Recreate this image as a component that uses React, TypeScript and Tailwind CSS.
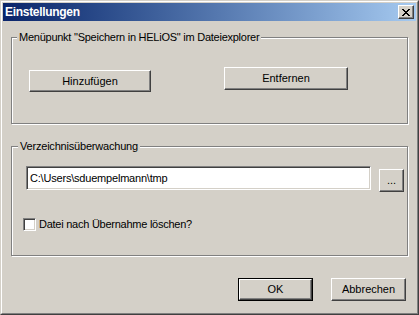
import React from "react";

function RaisedButton({ label, className }: { label: string; className: string }) {
  return (
    <button
      className={`flex items-center justify-center border border-t-white border-l-white border-r-[#404040] border-b-[#404040] bg-[#d4d0c8] shadow-[inset_-1px_-1px_0_#808080] leading-none ${className}`}
    >
      {label}
    </button>
  );
}

function DefaultButton({ label, className }: { label: string; className: string }) {
  return (
    <div className={`border border-black ${className}`}>
      <button className="flex h-full w-full items-center justify-center border border-t-white border-l-white border-r-[#404040] border-b-[#404040] bg-[#d4d0c8] shadow-[inset_-1px_-1px_0_#808080] leading-none">
        {label}
      </button>
    </div>
  );
}

export default function App() {
  return (
    <div className="h-[315px] w-[419px] border border-t-[#d4d0c8] border-l-[#d4d0c8] border-r-[#404040] border-b-[#404040] font-['Liberation_Sans',Arial,sans-serif] text-[11px] text-black">
      <div className="flex h-full flex-col border border-t-white border-l-white border-r-[#808080] border-b-[#808080] bg-[#d4d0c8] p-px">
        {/* title bar */}
        <div className="flex h-[18px] items-center justify-between bg-gradient-to-r from-[#0a246a] to-[#a6caf0] pl-[2px] pr-[2px]">
          <span className="text-[12px] font-bold leading-none tracking-[-0.3px] text-white">Einstellungen</span>
          <div className="flex h-[14px] w-[16px] items-center justify-center border border-t-white border-l-white border-r-[#404040] border-b-[#404040] bg-[#d4d0c8] shadow-[inset_-1px_-1px_0_#808080]">
            <svg width="8" height="7" viewBox="0 0 8 7" shapeRendering="crispEdges">
              <path d="M0 0h2v1H0zM1 1h2v1H1zM2 2h4v1H2zM3 3h2v1H3zM2 4h4v1H2zM1 5h2v1H1zM0 6h2v1H0zM6 0h2v1H6zM5 1h2v1H5zM5 5h2v1H5zM6 6h2v1H6z" fill="#000" />
            </svg>
          </div>
        </div>

        <div className="flex flex-1 flex-col px-[8px] pt-[16px]">
          {/* group 1 */}
          <div className="relative h-[87px] w-[397px] border border-[#808080] shadow-[inset_1px_1px_0_white,1px_1px_0_white]">
            <span className="absolute left-[5px] top-[-7px] bg-[#d4d0c8] px-[2px] leading-[13px] tracking-[-0.25px]">
              Menüpunkt "Speichern in HELiOS" im Dateiexplorer
            </span>
            <div className="flex items-start pl-[17px]">
              <RaisedButton label="Hinzufügen" className="mt-[32px] h-[22px] w-[122px]" />
              <RaisedButton label="Entfernen" className="ml-[73px] mt-[29px] h-[23px] w-[124px]" />
            </div>
          </div>

          {/* group 2 */}
          <div className="relative mt-[22px] h-[110px] w-[397px] border border-[#808080] shadow-[inset_1px_1px_0_white,1px_1px_0_white]">
            <span className="absolute left-[6px] top-[-7px] bg-[#d4d0c8] px-[2px] leading-[13px] tracking-[-0.2px]">
              Verzeichnisüberwachung
            </span>
            <div className="flex items-start pl-[14px] pt-[19px]">
              <div className="flex h-[24px] w-[345px] items-center border border-t-[#808080] border-l-[#808080] border-r-white border-b-white bg-white pl-[3px] tracking-[-0.2px] shadow-[inset_1px_1px_0_#404040,inset_-1px_-1px_0_#d4d0c8]">
                C:\Users\sduempelmann\tmp
              </div>
              <RaisedButton label="..." className="ml-[8px] mt-[3px] h-[23px] w-[25px]" />
            </div>
            <label className="ml-[11px] mt-[26px] flex items-center gap-[3px]">
              <span className="h-[13px] w-[13px] border border-t-[#808080] border-l-[#808080] border-r-white border-b-white bg-white shadow-[inset_1px_1px_0_#404040,inset_-1px_-1px_0_#d4d0c8]" />
              <span className="leading-[13px] tracking-[-0.25px]">Datei nach Übernahme löschen?</span>
            </label>
          </div>

          {/* footer */}
          <div className="mt-[22px] flex justify-end gap-[18px] pr-[2px]">
            <DefaultButton label="OK" className="h-[23px] w-[75px]" />
            <RaisedButton label="Abbrechen" className="h-[23px] w-[75px]" />
          </div>
        </div>
      </div>
    </div>
  );
}
